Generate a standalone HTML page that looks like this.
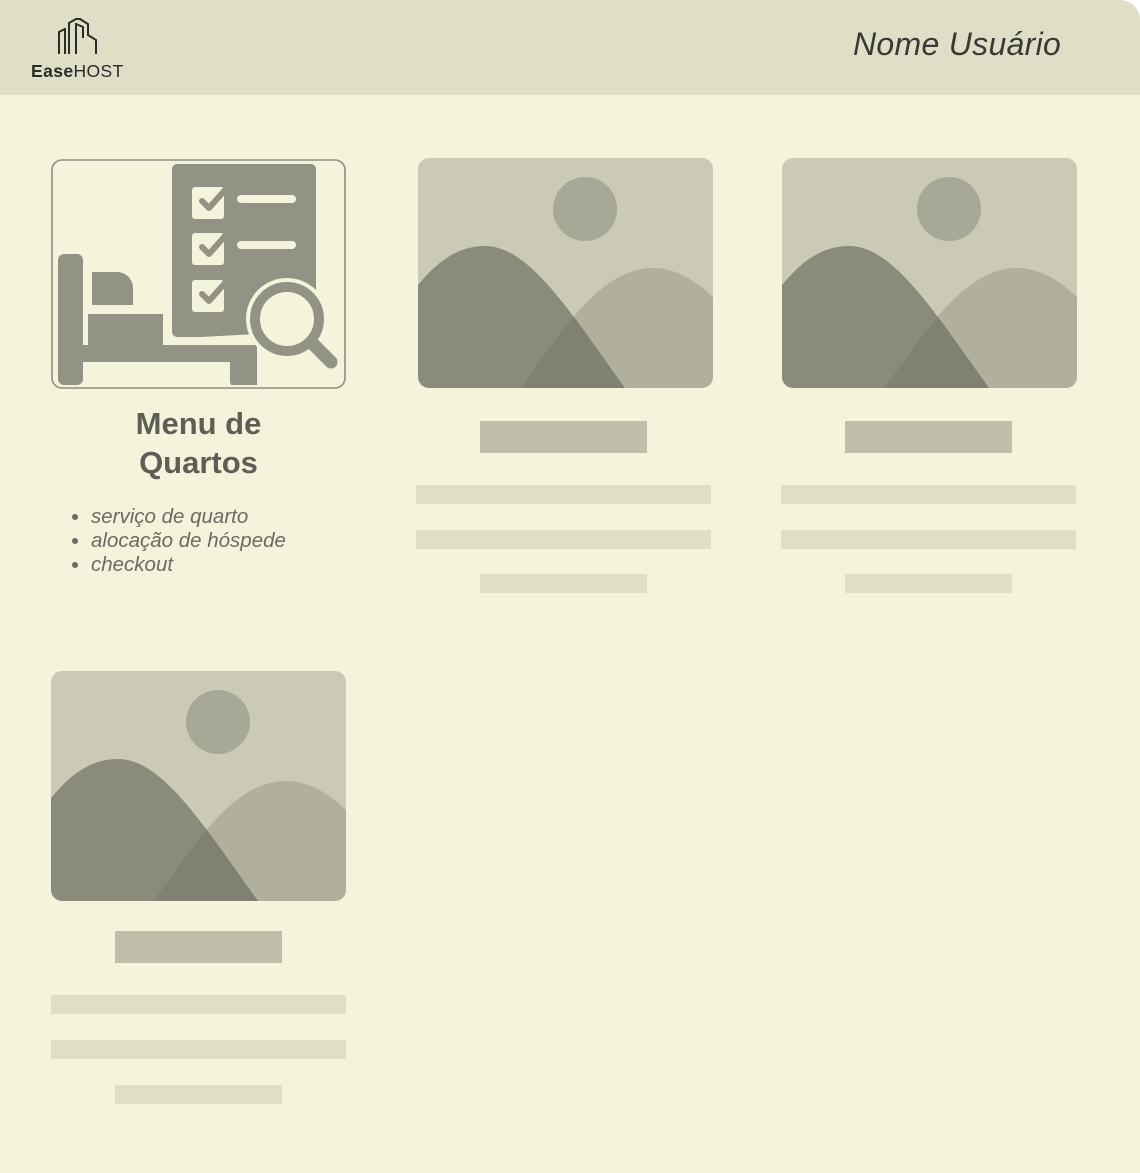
<!DOCTYPE html>
<html><head><meta charset="utf-8"><style>
html,body{margin:0;padding:0;background:#fff;}
#page{position:relative;width:1140px;height:1173px;background:#f4f4dd;overflow:hidden;border-top-right-radius:20px;font-family:"Liberation Sans",sans-serif;}
.hdr{position:absolute;left:0;top:0;width:1140px;height:95px;background:#dfdfc8;}
.user{position:absolute;left:853px;top:26px;font-size:32px;font-style:italic;font-weight:300;color:#3a3a35;letter-spacing:0.3px;}
.logo-t{position:absolute;left:31px;top:61px;font-size:17.5px;color:#2b2b28;letter-spacing:0.4px;}
.r{position:absolute;}
.t{background:#c0bfab;height:32px;}
.l{background:#dfdfc7;height:19px;}
h2{position:absolute;left:52px;width:293px;top:404px;margin:0;text-align:center;font-size:31px;line-height:39px;font-weight:bold;color:#5e5e55;}
ul{position:absolute;left:52px;top:505px;margin:0;padding-left:39px;font-size:20.5px;line-height:24px;font-style:italic;color:#6a6a60;}
</style></head><body><div id="page">
<div class="hdr"></div>
<svg class="r" style="left:0;top:0" width="110" height="60" viewBox="0 0 110 60" fill="none" stroke="#2b2b28" stroke-width="2">
<path d="M59,54 V32 L65,29 V54"/>
<path d="M69,54 V23 L76,19 H80 L88,24 V35 L96,40 V54"/>
<path d="M76,54 V24 L83,27 V38"/>
</svg>
<div class="logo-t"><b>Ease</b>HOST</div>
<div class="user">Nome Usuário</div>

<svg class="r" style="left:51px;top:159px" width="295" height="230" viewBox="0 0 295 230">
<rect x="1" y="1" width="293" height="228" rx="10" fill="none" stroke="#8f8f82" stroke-width="1.6"/>
<g fill="#939385">
<rect x="121" y="5" width="144" height="173" rx="5"/>
<rect x="7" y="95" width="25" height="131" rx="6"/>
<path d="M41,113 H66 A16,16 0 0 1 82,129 V146 H41 Z"/>
<path d="M37,155 H112 V186 H206 V226 H180 V203 H32 V186 H37 Z"/>
<rect x="179" y="200" width="27" height="26" rx="3"/>
<circle cx="236" cy="160" r="41" fill="#f4f4dd"/>
<path d="M112,180 Q118,186 128,186 H206 V175 Z" fill="#f4f4dd"/>
</g>
<g>
<rect x="141" y="28" width="32" height="32" rx="3" fill="#f4f4dd"/>
<rect x="141" y="74" width="32" height="32" rx="3" fill="#f4f4dd"/>
<rect x="141" y="121" width="32" height="32" rx="3" fill="#f4f4dd"/>
<g fill="none" stroke="#939385" stroke-width="6" stroke-linecap="round" stroke-linejoin="round">
<path d="M151,42 L158,49 L174,31"/><path d="M151,88 L158,95 L174,77"/><path d="M151,135 L158,142 L174,124"/>
</g>
<g fill="none" stroke="#f4f4dd" stroke-width="8" stroke-linecap="round"><path d="M190,40 H241"/><path d="M190,86 H241"/></g>
<circle cx="236" cy="160" r="32" fill="none" stroke="#939385" stroke-width="10"/>
<path d="M263,186 L280,203" stroke="#939385" stroke-width="13" stroke-linecap="round"/>
</g>
</svg>
<h2>Menu de<br>Quartos</h2>
<ul><li>serviço de quarto</li><li>alocação de hóspede</li><li>checkout</li></ul>

<svg width="0" height="0" style="position:absolute"><defs>
<clipPath id="cr"><rect width="295" height="230" rx="11"/></clipPath>
<clipPath id="dh"><path d="M0,127 C20,103 40,88 67,88 C110,88 150,150 207,230 L0,230 Z"/></clipPath>
<g id="ph" clip-path="url(#cr)">
<rect width="295" height="230" fill="#cacab5"/>
<circle cx="167" cy="51" r="32" fill="#a7a895"/>
<path d="M0,127 C20,103 40,88 67,88 C110,88 150,150 207,230 L0,230 Z" fill="#8b8b7c"/>
<path d="M102,230 C140,180 180,110 235,110 C260,110 280,125 295,139 L295,230 Z" fill="#b1b09c"/>
<path d="M102,230 C140,180 180,110 235,110 C260,110 280,125 295,139 L295,230 Z" fill="#818173" clip-path="url(#dh)"/>
</g></defs></svg>

<svg class="r" style="left:418px;top:158px" width="295" height="230"><use href="#ph"/></svg>
<svg class="r" style="left:782px;top:158px" width="295" height="230"><use href="#ph"/></svg>
<svg class="r" style="left:51px;top:671px" width="295" height="230"><use href="#ph"/></svg>

<div class="r t" style="left:480px;top:421px;width:167px"></div>
<div class="r l" style="left:416px;top:485px;width:295px"></div>
<div class="r l" style="left:416px;top:530px;width:295px"></div>
<div class="r l" style="left:480px;top:574px;width:167px"></div>

<div class="r t" style="left:845px;top:421px;width:167px"></div>
<div class="r l" style="left:781px;top:485px;width:295px"></div>
<div class="r l" style="left:781px;top:530px;width:295px"></div>
<div class="r l" style="left:845px;top:574px;width:167px"></div>

<div class="r t" style="left:115px;top:931px;width:167px"></div>
<div class="r l" style="left:51px;top:995px;width:295px"></div>
<div class="r l" style="left:51px;top:1040px;width:295px"></div>
<div class="r l" style="left:115px;top:1085px;width:167px"></div>
</div></body></html>
